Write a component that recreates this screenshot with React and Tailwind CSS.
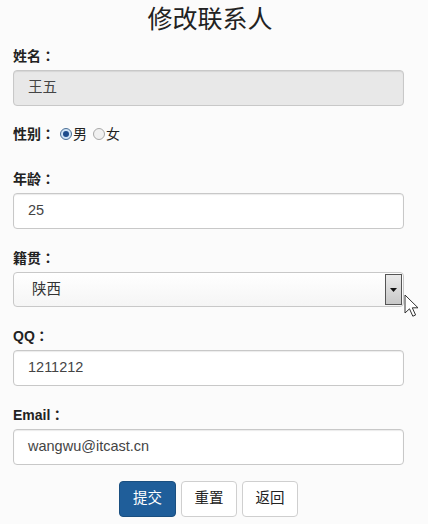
import React from "react";

const font = { fontFamily: '"Liberation Sans", Arial, "Noto Sans CJK SC", sans-serif' };

// 全角冒号在 SC 字体里靠左，换 TC 让它居中
const Colon = () => <span style={{ fontFamily: '"Noto Sans CJK TC", sans-serif' }}>：</span>;

const Label = ({ children, className = "" }) => (
  <label className={`block h-5 text-[14px] font-bold leading-5 text-[#222] ${className}`}>
    {children}
    <Colon />
  </label>
);

const Input = ({ value, disabled }) => (
  <div
    className={`mt-[5px] flex h-[36px] w-full items-center rounded-[4px] border border-[#c8c8c8] pl-[14px] text-[14.5px] text-[#444] shadow-[inset_0_1px_1px_rgba(0,0,0,0.08)] ${
      disabled ? "bg-[#e8e8e8]" : "bg-white"
    }`}
  >
    {value}
  </div>
);

const Radio = ({ checked }) => (
  <span
    className={`inline-flex h-[12px] w-[12px] items-center justify-center rounded-full border ${
      checked ? "border-[#4a6f96] bg-[#cfe3f6]" : "border-[#a8a8a8] bg-[#f0f0f0]"
    }`}
  >
    {checked && <span className="h-[6px] w-[6px] rounded-full bg-[#1d4c8c]" />}
  </span>
);

export default function App() {
  return (
    <div className="relative min-h-[524px] w-[428px] bg-[#fbfbfb]" style={font}>
      <div className="flex w-[391px] flex-col pl-[13px] box-content">
        <h1 className="flex h-[40px] items-center justify-center pl-[3px] text-[25px] font-normal text-[#222]">
          修改联系人
        </h1>

        <Label className="mt-[5px]">姓名</Label>
        <Input value="王五" disabled />

        <div className="mt-[18px] flex h-5 items-center text-[14px] text-[#222]">
          <span className="font-bold">
            性别
            <Colon />
          </span>
          <span className="ml-[5px] flex items-center gap-[1px]">
            <Radio checked />
            <span>男</span>
          </span>
          <span className="ml-[6px] flex items-center gap-[1px]">
            <Radio />
            <span>女</span>
          </span>
        </div>

        <Label className="mt-[24px]">年龄</Label>
        <Input value="25" />

        <Label className="mt-[18px]">籍贯</Label>
        <div className="mt-[5px] flex h-[35px] w-full items-stretch rounded-[4px] border border-[#c8c8c8] bg-gradient-to-b from-white to-[#f5f5f5]">
          <div className="flex flex-1 items-center pl-[18px] text-[14.5px] text-[#333]">陕西</div>
          <div className="m-[1px] flex w-[17px] items-center justify-center border border-[#555] bg-gradient-to-b from-[#eaeaea] to-[#c8c8c8]">
            <svg width="7" height="4" viewBox="0 0 7 4">
              <path d="M0 0h7L3.5 4z" fill="#111" />
            </svg>
          </div>
        </div>

        <Label className="mt-[18px]">QQ</Label>
        <Input value="1211212" />

        <Label className="mt-[18px]">Email</Label>
        <Input value="wangwu@itcast.cn" />

        <div className="mt-[16px] flex justify-center gap-[5px]">
          <button className="h-[36px] w-[57px] rounded-[4px] border border-[#1a4f80] bg-[#1f5e9a] text-[14.5px] text-white">
            提交
          </button>
          <button className="h-[36px] w-[56px] rounded-[4px] border border-[#cfcfcf] bg-white text-[14.5px] text-[#222]">
            重置
          </button>
          <button className="h-[36px] w-[56px] rounded-[4px] border border-[#cfcfcf] bg-white text-[14.5px] text-[#222]">
            返回
          </button>
        </div>
      </div>

      <svg className="absolute left-[404px] top-[294px]" width="16" height="24" viewBox="0 0 16 24">
        <path d="M1 1v18l4.5-4.2 3.3 7.4 2.8-1.2-3.3-7.2H14z" fill="#fff" stroke="#333" strokeWidth="1" strokeLinejoin="round" />
      </svg>
    </div>
  );
}
